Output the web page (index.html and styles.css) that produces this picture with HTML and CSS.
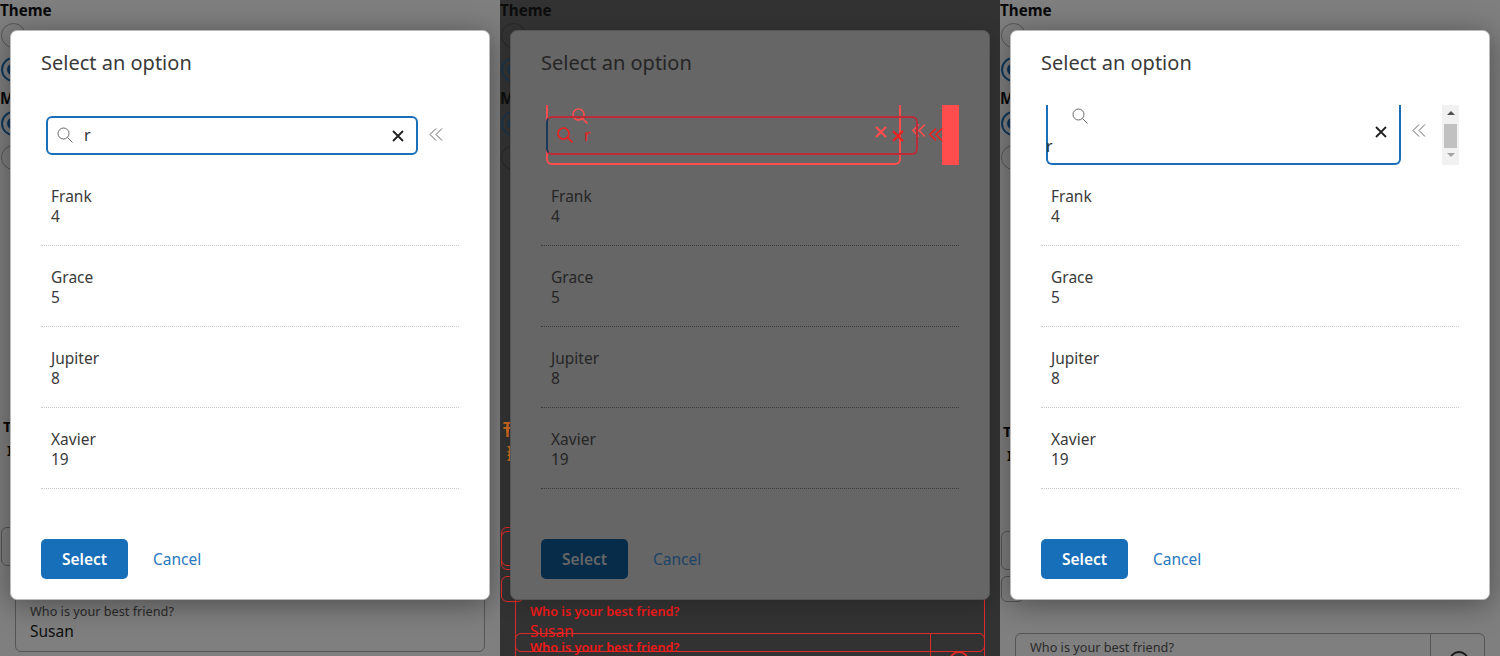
FILE: index.html
```html
<!DOCTYPE html>
<html lang="en">
<head>
    <meta charset="UTF-8">
    <meta name="viewport" content="width=device-width, initial-scale=1.0">
    <title>Select an option - visual diff</title>
    <link rel="stylesheet" href="styles.css">
</head>
<body>
    <svg class="icon-defs" width="0" height="0" aria-hidden="true">
        <symbol id="icon-search" viewBox="0 0 16 16">
            <circle cx="6.5" cy="6.5" r="5.5" fill="none" stroke="currentColor"/>
            <path d="M10.5 10.5 15.5 15.5" fill="none" stroke="currentColor"/>
        </symbol>
        <symbol id="icon-close" viewBox="0 0 14 14">
            <path d="M2 2 12 12M12 2 2 12" fill="none" stroke="currentColor"/>
        </symbol>
        <symbol id="icon-collapse" viewBox="0 0 14 14">
            <path d="M7 .5 1 6.5 7 12.5M13 .5 7 6.5 13 12.5" fill="none" stroke="currentColor"/>
        </symbol>
    </svg>

    <!-- before -->
    <section class="panel">
        <div class="page">
            <div class="group-label">Theme</div>
            <div class="radio-group">
                <div class="radio"></div>
                <div class="radio radio-on"></div>
            </div>
            <div class="group-label">M</div>
            <div class="radio-group">
                <div class="radio radio-on"></div>
                <div class="radio"></div>
            </div>
            <div class="lower lower-before">
                <div class="cut-label">T</div>
                <div class="cut-label cut-label-inset">I</div>
                <div class="stub stub-tall"></div>
                <div class="field">
                    <div class="field-main">
                        <div class="field-label">Who is your best friend?</div>
                        <div class="field-value">Susan</div>
                    </div>
                </div>
            </div>
        </div>
        <div class="backdrop"></div>
        <div class="dialog">
            <h2 class="dialog-title">Select an option</h2>
            <div class="search-area">
                <div class="search-box">
                    <svg class="search-icon"><use href="#icon-search"/></svg>
                    <span class="search-text">r</span>
                    <svg class="close-icon"><use href="#icon-close"/></svg>
                </div>
                <svg class="collapse-icon"><use href="#icon-collapse"/></svg>
            </div>
            <ul class="option-list">
                <li class="option"><div>Frank</div><div>4</div></li>
                <li class="option"><div>Grace</div><div>5</div></li>
                <li class="option"><div>Jupiter</div><div>8</div></li>
                <li class="option"><div>Xavier</div><div>19</div></li>
            </ul>
            <div class="dialog-actions">
                <button class="btn-select">Select</button>
                <a class="btn-cancel">Cancel</a>
            </div>
        </div>
    </section>

    <!-- diff -->
    <section class="panel panel-diff">
        <div class="page">
            <div class="group-label">Theme</div>
            <div class="radio-group">
                <div class="radio"></div>
                <div class="radio radio-on"></div>
            </div>
            <div class="group-label">M</div>
            <div class="radio-group">
                <div class="radio radio-on"></div>
                <div class="radio"></div>
            </div>
            <div class="lower lower-before">
                <div class="cut-label">T</div>
                <div class="cut-label cut-label-inset">I</div>
                <div class="stub stub-tall"></div>
                <div class="field">
                    <div class="field-main">
                        <div class="field-label">Who is your best friend?</div>
                        <div class="field-value">Susan</div>
                    </div>
                </div>
            </div>
        </div>
        <div class="page page-ghost">
            <div class="lower lower-after">
                <div class="cut-label">T</div>
                <div class="cut-label cut-label-inset">I</div>
                <div class="stub stub-after"></div>
                <div class="stub stub-short"></div>
                <div class="field field-after">
                    <div class="field-main">
                        <div class="field-label">Who is your best friend?</div>
                    </div>
                    <div class="field-btn"><span class="field-circle"></span></div>
                </div>
            </div>
        </div>
        <div class="dialog">
            <h2 class="dialog-title">Select an option</h2>
            <div class="search-stack">
                <div class="search-area search-after">
                    <div class="search-box">
                        <svg class="search-icon"><use href="#icon-search"/></svg>
                        <svg class="close-icon"><use href="#icon-close"/></svg>
                    </div>
                    <svg class="collapse-icon"><use href="#icon-collapse"/></svg>
                    <div class="scrollbar"></div>
                </div>
                <div class="search-area">
                    <div class="search-box">
                        <svg class="search-icon"><use href="#icon-search"/></svg>
                        <span class="search-text">r</span>
                        <svg class="close-icon"><use href="#icon-close"/></svg>
                    </div>
                    <svg class="collapse-icon"><use href="#icon-collapse"/></svg>
                </div>
            </div>
            <ul class="option-list">
                <li class="option"><div>Frank</div><div>4</div></li>
                <li class="option"><div>Grace</div><div>5</div></li>
                <li class="option"><div>Jupiter</div><div>8</div></li>
                <li class="option"><div>Xavier</div><div>19</div></li>
            </ul>
            <div class="dialog-actions">
                <button class="btn-select">Select</button>
                <a class="btn-cancel">Cancel</a>
            </div>
        </div>
    </section>

    <!-- after -->
    <section class="panel">
        <div class="page">
            <div class="group-label">Theme</div>
            <div class="radio-group">
                <div class="radio"></div>
                <div class="radio radio-on"></div>
            </div>
            <div class="group-label">M</div>
            <div class="radio-group">
                <div class="radio radio-on"></div>
                <div class="radio"></div>
            </div>
            <div class="lower lower-after">
                <div class="cut-label">T</div>
                <div class="cut-label cut-label-inset">I</div>
                <div class="stub stub-after"></div>
                <div class="stub stub-short"></div>
                <div class="field field-after">
                    <div class="field-main">
                        <div class="field-label">Who is your best friend?</div>
                    </div>
                    <div class="field-btn"><span class="field-circle"></span></div>
                </div>
            </div>
        </div>
        <div class="backdrop"></div>
        <div class="dialog">
            <h2 class="dialog-title">Select an option</h2>
            <div class="search-area search-after">
                <div class="search-box">
                    <svg class="search-icon"><use href="#icon-search"/></svg>
                    <span class="search-text">r</span>
                    <svg class="close-icon"><use href="#icon-close"/></svg>
                </div>
                <svg class="collapse-icon"><use href="#icon-collapse"/></svg>
                <div class="scrollbar">
                    <span class="scroll-up"></span>
                    <span class="scroll-thumb"></span>
                    <span class="scroll-down"></span>
                </div>
            </div>
            <ul class="option-list">
                <li class="option"><div>Frank</div><div>4</div></li>
                <li class="option"><div>Grace</div><div>5</div></li>
                <li class="option"><div>Jupiter</div><div>8</div></li>
                <li class="option"><div>Xavier</div><div>19</div></li>
            </ul>
            <div class="dialog-actions">
                <button class="btn-select">Select</button>
                <a class="btn-cancel">Cancel</a>
            </div>
        </div>
    </section>
</body>
</html>
```

FILE: styles.css
```css
* {
    box-sizing: border-box;
}
body {
    margin: 0;
    display: flex;
    width: 1500px;
    height: 656px;
    overflow: hidden;
    font-family: "Noto Sans", Arial, sans-serif;
    color: #333;
    background: #fff;
}
.icon-defs {
    position: absolute;
}
.panel {
    position: relative;
    flex: 0 0 500px;
    height: 656px;
    overflow: hidden;
    background: #fff;
}

/* page behind the dialog */
.page {
    height: 656px;
}
.group-label {
    height: 20px;
    font-size: 15.2px;
    font-weight: 700;
    line-height: 21px;
    color: #111;
}
.radio-group {
    display: flex;
    flex-direction: column;
    gap: 9px;
    padding: 3px 0 6px 1px;
}
.radio {
    width: 25px;
    height: 25px;
    border: 1px solid #aaa;
    border-radius: 50%;
    background: #fff;
}
.radio-on {
    border: 2px solid #1a6fb8;
}
.radio-on::after {
    content: "";
    display: block;
    width: 13px;
    height: 13px;
    margin: 4px;
    border-radius: 50%;
    background: #1a6fb8;
}
.lower-before {
    margin-top: 240px;
}
.lower-after {
    margin-top: 245px;
}
.cut-label {
    height: 20px;
    padding-left: 3px;
    font-size: 15px;
    font-weight: 700;
    line-height: 20px;
    color: #111;
}
.cut-label-inset {
    margin-top: 4px;
    padding-left: 7px;
}
.stub {
    width: 100px;
    margin-left: 1px;
    border: 1px solid #aaa;
    border-radius: 6px;
}
.stub-tall {
    height: 39px;
    margin-top: 67px;
}
.stub-after {
    height: 39px;
    margin-top: 66px;
}
.stub-short {
    width: 23px;
    height: 26px;
    margin-top: 6px;
}
.field {
    display: flex;
    width: 470px;
    height: 62px;
    margin: 24px 0 0 15px;
    border: 1px solid #aaa;
    border-radius: 6px;
}
.field-after {
    height: 70px;
    margin-top: 31px;
}
.field-main {
    flex: 1;
    padding: 11px 14px 0;
}
.field-after .field-main {
    padding-top: 4px;
}
.field-label {
    font-size: 12.7px;
    line-height: 18px;
    color: #555;
}
.field-value {
    font-size: 15.5px;
    line-height: 22px;
    color: #222;
}
.field-btn {
    flex: 0 0 54px;
    padding: 17px 0 0 18px;
    border-left: 1px solid #aaa;
}
.field-circle {
    display: block;
    width: 20px;
    height: 20px;
    border: 2px solid #333;
    border-radius: 50%;
}
.backdrop {
    position: absolute;
    inset: 0;
    background: rgba(0, 0, 0, 0.5);
}

/* dialog */
.dialog {
    position: absolute;
    left: 10px;
    top: 30px;
    width: 480px;
    height: 570px;
    padding: 18px 30px 0;
    border: 1px solid #bbb;
    border-radius: 7px;
    background: #fff;
    box-shadow: 0 4px 30px rgba(0, 0, 0, 0.4);
}
.dialog-title {
    height: 27px;
    margin: 0 0 29px;
    font-size: 20px;
    font-weight: 400;
    line-height: 27px;
    color: #3a3a3a;
}
.search-area {
    display: flex;
    align-items: center;
    height: 60px;
    padding-left: 5px;
    overflow: hidden;
}
.search-box {
    position: relative;
    flex: 0 0 372px;
    height: 39px;
    padding-left: 36px;
    border: 2px solid #1a6fb8;
    border-radius: 6px;
    background: #fff;
}
.search-text {
    font-size: 16px;
    line-height: 35px;
}
.search-icon {
    position: absolute;
    left: 9px;
    top: 9px;
    width: 16px;
    height: 16px;
    color: #666;
}
.close-icon {
    position: absolute;
    right: 11px;
    top: 11px;
    width: 14px;
    height: 14px;
    color: #222;
    stroke-width: 1.8;
}
.collapse-icon {
    flex: 0 0 14px;
    width: 14px;
    height: 14px;
    margin-left: 11px;
    color: #666;
}

/* overflowing search row */
.search-after .search-box {
    flex-basis: 355px;
    height: 70px;
    margin-top: -10px;
    padding: 0;
    border-top: 0;
}
.search-after .search-text {
    position: absolute;
    left: -2px;
    bottom: 6px;
    line-height: 22px;
}
.search-after .search-icon {
    left: 24px;
    top: 13px;
}
.search-after .close-icon {
    right: 11px;
    top: 30px;
}
.search-after .collapse-icon {
    margin: -8px 0 0 11px;
}
.scrollbar {
    display: flex;
    flex-direction: column;
    align-items: center;
    flex: 0 0 17px;
    height: 60px;
    margin-left: auto;
    background: #f1f1f1;
}
.scroll-up {
    margin-top: 6px;
    border: 4px solid transparent;
    border-top: 0;
    border-bottom: 4px solid #505050;
}
.scroll-thumb {
    width: 13px;
    height: 24px;
    margin-top: 9px;
    background: #c1c1c1;
}
.scroll-down {
    margin-top: 5px;
    border: 4px solid transparent;
    border-bottom: 0;
    border-top: 4px solid #a3a3a3;
}
.option-list {
    margin: 0;
    padding: 0;
    list-style-type: none;
}
.option {
    height: 81px;
    padding: 21px 10px 0;
    border-bottom: 1px dotted #ccc;
    font-size: 15.5px;
    line-height: 20px;
    color: #3a3a3a;
}
.dialog-actions {
    display: flex;
    align-items: center;
    gap: 25px;
    margin-top: 50px;
}
.btn-select {
    width: 87px;
    height: 40px;
    border: none;
    border-radius: 5px;
    background: #176fb9;
    color: #fff;
    font-family: inherit;
    font-size: 15.5px;
    font-weight: 600;
}
.btn-cancel {
    font-size: 15.5px;
    color: #2a78c0;
}

/* middle panel: difference of the two others */
.panel-diff {
    background: #323232;
}
.panel-diff .radio {
    border-color: #262626;
    background: transparent;
}
.panel-diff .radio-on {
    border-color: #1b3347;
}
.panel-diff .radio-on::after {
    background: #1b3347;
}
.panel-diff .group-label {
    color: #0c0c0c;
}
.panel-diff .cut-label {
    color: #d2691e;
}
.panel-diff .stub,
.panel-diff .field,
.panel-diff .field-btn {
    border-color: #e02a2a;
}
.panel-diff .field-label {
    color: #f01818;
    font-weight: 600;
}
.panel-diff .field-value {
    color: #f01818;
}
.panel-diff .field-circle {
    border-color: #e02a2a;
}
.page-ghost {
    position: absolute;
    left: 0;
    top: 176px;
}
.panel-diff .dialog {
    border-color: #555;
    background: #666;
    box-shadow: 0 4px 20px rgba(0, 0, 0, 0.2);
}
.panel-diff .dialog-title,
.panel-diff .option {
    color: #252525;
}
.panel-diff .option {
    border-bottom-color: #3a3a3a;
}
.panel-diff .btn-select {
    background: #072c4a;
    color: #666;
}
.panel-diff .btn-cancel {
    color: #1d4468;
}
.search-stack {
    position: relative;
    height: 60px;
}
.search-stack .search-area {
    position: absolute;
    inset: 0;
}
.panel-diff .search-box {
    background: transparent;
    border-color: #bd2a38;
    border-left-color: #1a3a5c;
}
.panel-diff .search-icon,
.panel-diff .collapse-icon {
    stroke-width: 1.6;
}
.panel-diff .close-icon {
    stroke-width: 2.2;
}
.panel-diff .search-icon,
.panel-diff .search-text,
.panel-diff .close-icon,
.panel-diff .collapse-icon {
    color: #ee2020;
}
.panel-diff .search-after .search-box {
    border-color: #ff4d4d;
}
.panel-diff .search-after .search-icon,
.panel-diff .search-after .close-icon,
.panel-diff .search-after .collapse-icon {
    color: #ff4d4d;
}
.panel-diff .scrollbar {
    background: #ff4d4d;
}
```
